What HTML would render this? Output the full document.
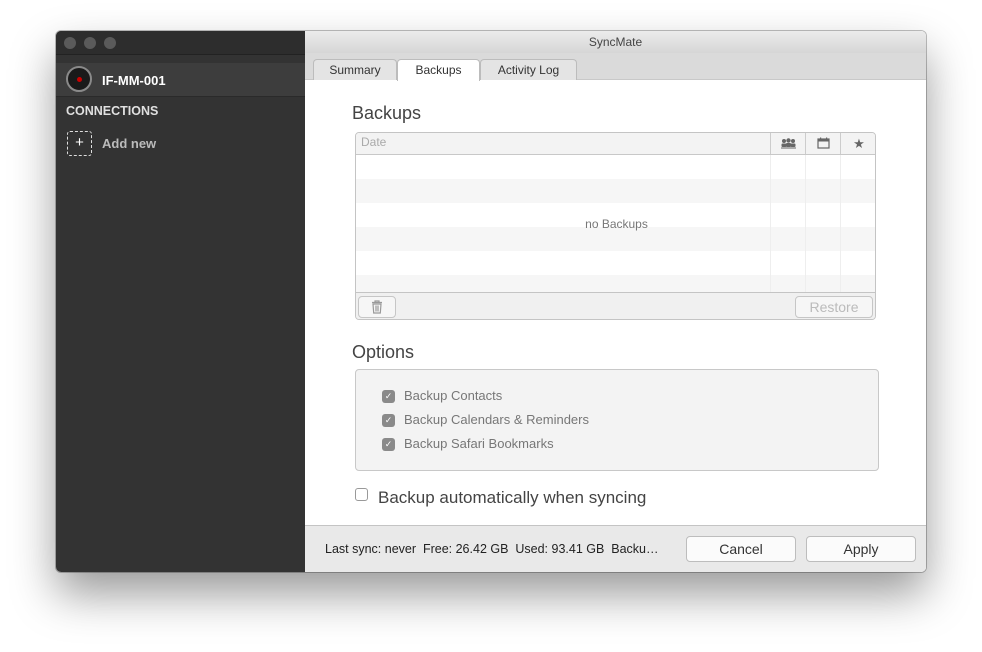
<!DOCTYPE html>
<html><head><meta charset="utf-8"><style>
*{margin:0;padding:0;box-sizing:border-box}
body{width:982px;height:652px;background:#fff;font-family:"Liberation Sans",sans-serif;position:relative;overflow:hidden}
.win{position:absolute;left:56px;top:31px;width:870px;height:541px;border-radius:5px;overflow:hidden;box-shadow:0 22px 45px rgba(0,0,0,.4),0 0 0 1px rgba(0,0,0,.25)}
.side{position:absolute;left:0;top:0;width:249px;height:541px;background:#333}
.stb{height:24px;background:#2d2d2d;border-bottom:1px solid #222;position:relative}
.dot{position:absolute;top:6px;width:12px;height:12px;border-radius:50%;background:#5a5a5a}
.dev{position:absolute;top:32px;left:0;width:249px;height:34px;background:#3d3d3d;border-bottom:1px solid #2a2a2a}
.ic{position:absolute;left:10px;top:3px;width:26px;height:26px;border-radius:50%;background:#1a1a1a;border:2px solid #8a8a8a}
.ic:after{content:"";position:absolute;left:9px;top:9px;width:5px;height:5px;border-radius:50%;background:#c00}
.main{position:absolute;left:249px;top:0;width:621px;height:541px;background:#fff}
.tb{height:22px;background:linear-gradient(#ececec,#d6d6d6);text-align:center;font-size:12px;color:#444;line-height:22px}
.tabs{height:27px;background:#dadada;border-bottom:1px solid #c8c8c8;position:relative}
.tab{position:absolute;top:6px;height:21px;border:1px solid #bcbcbc;border-bottom:none;border-radius:4px 4px 0 0;background:#e4e4e4;font-size:12px;color:#333;text-align:center;line-height:20px}
.foot{position:absolute;left:0;top:494px;width:621px;height:47px;background:#e9e9e9;border-top:1px solid #c4c4c4}
.btn{position:absolute;top:10px;height:26px;border:1px solid #bdbdbd;border-radius:4px;background:#fbfbfb;font-size:14px;color:#333;text-align:center;line-height:24px}
.cb{position:absolute;width:13px;height:13px;border-radius:3px;background:#8a8a8a;color:#fff;font-size:9px;line-height:13px;text-align:center}
.lbl{position:absolute;font-size:13px;color:#777}
</style></head><body>
<div class="win">
 <div class="side">
  <div class="stb"><div class="dot" style="left:8px"></div><div class="dot" style="left:28px"></div><div class="dot" style="left:48px"></div></div>
  <div class="dev"><div class="ic"></div><div style="position:absolute;left:46px;top:10px;color:#fff;font-size:13px;font-weight:bold">IF-MM-001</div></div>
  <div style="position:absolute;left:10px;top:73px;color:#e0e0e0;font-size:12.5px;font-weight:bold">CONNECTIONS</div>
  <div style="position:absolute;left:11px;top:100px;width:25px;height:25px;border:1px dashed #ddd;border-radius:3px;color:#fff;text-align:center;line-height:22px;font-size:15px">+</div>
  <div style="position:absolute;left:46px;top:105px;color:#bbb;font-size:13px;font-weight:bold">Add new</div>
 </div>
 <div class="main">
  <div class="tb">SyncMate</div>
  <div class="tabs">
   <div class="tab" style="left:8px;width:84px">Summary</div>
   <div class="tab" style="left:92px;width:83px;background:#fff;height:22px">Backups</div>
   <div class="tab" style="left:175px;width:97px">Activity Log</div>
  </div>
  <div style="position:absolute;left:47px;top:72px;font-size:18px;color:#444">Backups</div>
  <div style="position:absolute;left:50px;top:101px;width:521px;height:188px;border:1px solid #c4c4c4;border-radius:4px;overflow:hidden">
   <div style="height:22px;background:#f3f3f3;border-bottom:1px solid #c8c8c8;position:relative">
    <span style="position:absolute;left:5px;top:2px;font-size:12px;color:#aaa">Date</span>
    <div style="position:absolute;left:414px;top:0;width:35px;height:21px;border-left:1px solid #ccc"><svg width="35" height="21"><g fill="#666"><circle cx="13" cy="8" r="2"/><circle cx="17.5" cy="7.5" r="2.2"/><circle cx="22" cy="8" r="2"/><rect x="10.5" y="10.5" width="5" height="3.5" rx="1"/><rect x="15" y="10" width="5" height="4" rx="1"/><rect x="19.5" y="10.5" width="5" height="3.5" rx="1"/><rect x="10" y="14.5" width="15" height="1"/></g></svg></div>
    <div style="position:absolute;left:449px;top:0;width:35px;height:21px;border-left:1px solid #ccc"><svg width="35" height="21"><rect x="12" y="6" width="11" height="9" fill="none" stroke="#666" stroke-width="1.2"/><rect x="12" y="6" width="11" height="2.5" fill="#666"/><rect x="14" y="4.5" width="1.2" height="2" fill="#666"/><rect x="20" y="4.5" width="1.2" height="2" fill="#666"/></svg></div>
    <div style="position:absolute;left:484px;top:0;width:37px;height:21px;border-left:1px solid #ccc;text-align:center;font-size:13px;color:#666;line-height:21px">★</div>
   </div>
   <div style="height:137px;position:relative;background:repeating-linear-gradient(#fff 0 24px,#f6f6f6 24px 48px)">
    <div style="position:absolute;left:414px;top:0;height:137px;border-left:1px solid #eee"></div>
    <div style="position:absolute;left:449px;top:0;height:137px;border-left:1px solid #eee"></div>
    <div style="position:absolute;left:484px;top:0;height:137px;border-left:1px solid #eee"></div>
    <div style="position:absolute;left:0;width:521px;top:62px;text-align:center;font-size:12px;color:#777">no Backups</div>
   </div>
   <div style="height:28px;background:#f0f0f0;border-top:1px solid #c4c4c4;position:relative">
    <div style="position:absolute;left:2px;top:3px;width:38px;height:22px;border:1px solid #c6c6c6;border-radius:4px;background:#f6f6f6"><svg width="36" height="20"><g fill="none" stroke="#999" stroke-width="1.2"><path d="M13 5.5h10M16 5.5V4h4v1.5M14 7h8l-.7 9h-6.6z"/><path d="M17 8.5v6M19 8.5v6"/></g></svg></div>
    <div style="position:absolute;right:2px;top:3px;width:78px;height:22px;border:1px solid #c6c6c6;border-radius:4px;background:#f6f6f6;text-align:center;color:#bbb;font-size:14px;line-height:20px">Restore</div>
   </div>
  </div>
  <div style="position:absolute;left:47px;top:311px;font-size:18px;color:#444">Options</div>
  <div style="position:absolute;left:50px;top:338px;width:524px;height:102px;border:1px solid #c8c8c8;border-radius:4px;background:#f3f3f3">
   <div class="cb" style="left:26px;top:20px">✓</div><div class="lbl" style="left:48px;top:18px">Backup Contacts</div>
   <div class="cb" style="left:26px;top:44px">✓</div><div class="lbl" style="left:48px;top:42px">Backup Calendars &amp; Reminders</div>
   <div class="cb" style="left:26px;top:68px">✓</div><div class="lbl" style="left:48px;top:66px">Backup Safari Bookmarks</div>
  </div>
  <div style="position:absolute;left:50px;top:457px;width:13px;height:13px;border:1px solid #999;border-radius:3px;background:#fff"></div>
  <div style="position:absolute;left:73px;top:457px;font-size:17px;color:#444">Backup automatically when syncing</div>
  <div class="foot">
   <div style="position:absolute;left:20px;top:16px;font-size:12.5px;color:#222">Last sync: never&nbsp; Free: 26.42 GB&nbsp; Used: 93.41 GB&nbsp; Backu…</div>
   <div class="btn" style="left:381px;width:110px">Cancel</div>
   <div class="btn" style="left:501px;width:110px">Apply</div>
  </div>
 </div>
</div>
</body></html>
